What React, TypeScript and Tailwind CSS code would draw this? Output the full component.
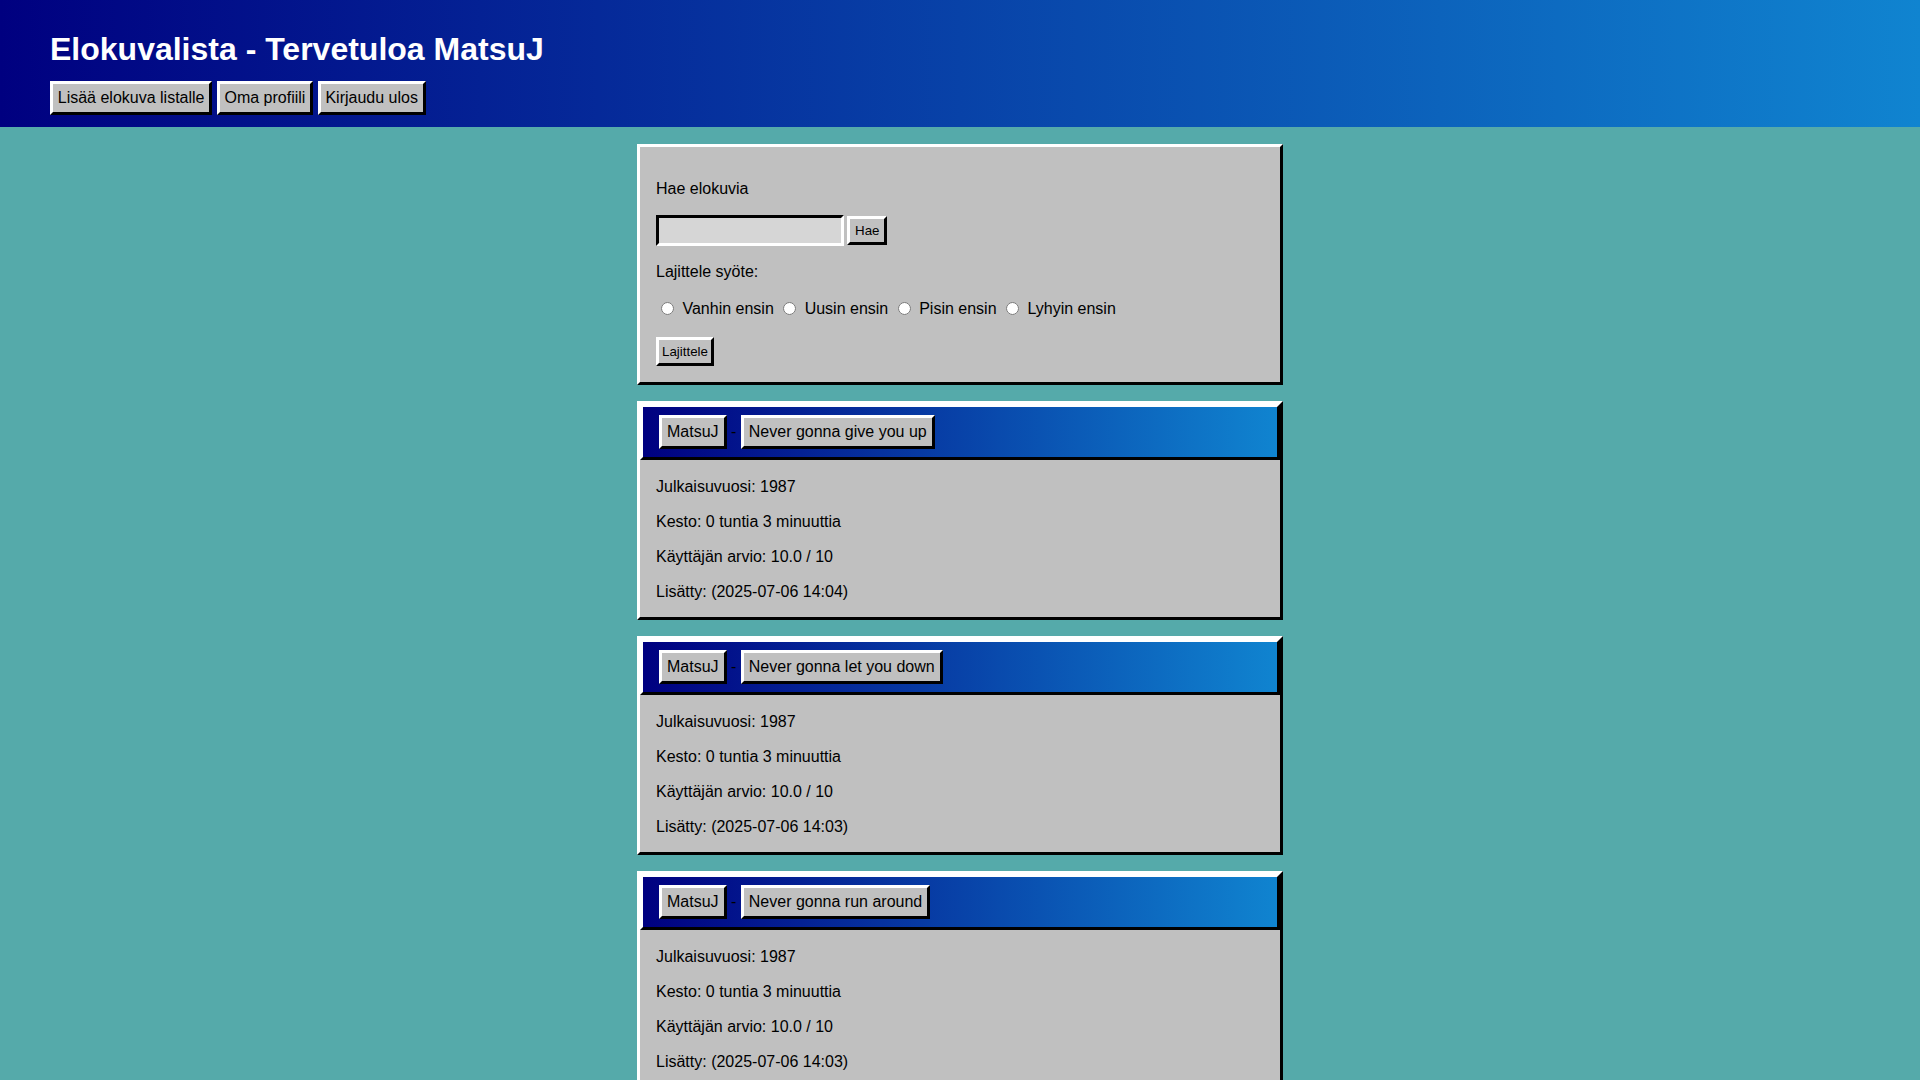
import React from "react";

const outset = "border-[3px] border-t-white border-l-white border-r-black border-b-black";
const bigBtn = `${outset} bg-[#c0c0c0] text-black text-[16px] leading-[normal] py-[5px] inline-block`;
const smallBtn = `${outset} bg-[#c0c0c0] text-black text-[13.33px] leading-[normal] h-[29px] inline-flex items-center`;

const movies = [
  { title: "Never gonna give you up", added: "2025-07-06 14:04" },
  { title: "Never gonna let you down", added: "2025-07-06 14:03" },
  { title: "Never gonna run around", added: "2025-07-06 14:03" },
];

function Card({ title, added }: { title: string; added: string }) {
  return (
    <div className={`w-[646px] mx-auto mt-[16px] bg-[#c0c0c0] ${outset}`}>
      <div className={`${outset} bg-[linear-gradient(to_right,#000080,#1084d0)] h-[56px] flex items-center pl-[16px] text-black`}>
        <span className="whitespace-pre">
          <button className={`${bigBtn} px-[5px]`}>MatsuJ</button>{" - "}<button className={`${bigBtn} px-[5px]`}>{title}</button>
        </span>
      </div>
      <div className="px-4 py-[0.1px] leading-[19.2px]">
        <p className="my-4">Julkaisuvuosi: 1987</p>
        <p className="my-4">Kesto: 0 tuntia 3 minuuttia</p>
        <p className="my-4">Käyttäjän arvio: 10.0 / 10</p>
        <p className="my-4">Lisätty: ({added})</p>
      </div>
    </div>
  );
}

function Radio({ label, last }: { label: string; last?: boolean }) {
  return (
    <>
      <input type="radio" name="s" className="ml-[5px] mr-[4px]" />
      <label>{" " + label + (last ? "" : " ")}</label>
    </>
  );
}

export default function App() {
  return (
    <div className="min-h-screen bg-[#55aaaa] font-['Liberation_Sans',Arial,sans-serif] text-[16px] leading-[normal] text-black pb-8">
      <header className="bg-[linear-gradient(to_right,#000080,#1084d0)] h-[127px] pl-[50px] pt-[31px]">
        <h1 className="text-[32px] font-bold text-white leading-[37px]">Elokuvalista - Tervetuloa MatsuJ</h1>
        <nav className="mt-[13px] flex gap-[4.5px]">
          <button className={`${bigBtn} px-[4.75px]`}>Lisää elokuva listalle</button>
          <button className={`${bigBtn} px-[4.75px]`}>Oma profiili</button>
          <button className={`${bigBtn} px-[4.75px]`}>Kirjaudu ulos</button>
        </nav>
      </header>

      <div className={`w-[646px] mx-auto mt-[17px] bg-[#c0c0c0] ${outset} px-4 pt-[16px] pb-[16px] leading-[19.2px]`}>
        <p className="my-4">Hae elokuvia</p>
        <div className="flex items-center gap-[3px] h-[32px]">
          <input
            type="text"
            className="w-[188px] h-[31px] bg-[#d6d6d6] border-[3px] border-t-black border-l-black border-r-white border-b-white outline-none"
          />
          <button className={`${smallBtn} px-[5px]`}>Hae</button>
        </div>
        <p className="my-4">Lajittele syöte:</p>
        <div className="h-[23px] flex items-center whitespace-pre">
          <Radio label="Vanhin ensin" />
          <Radio label="Uusin ensin" />
          <Radio label="Pisin ensin" />
          <Radio label="Lyhyin ensin" last />
        </div>
        <div className="mt-[17px] flex">
          <button className={`${smallBtn} px-[3px]`}>Lajittele</button>
        </div>
      </div>

      {movies.map((m, i) => (
        <Card key={i} title={m.title} added={m.added} />
      ))}
    </div>
  );
}
